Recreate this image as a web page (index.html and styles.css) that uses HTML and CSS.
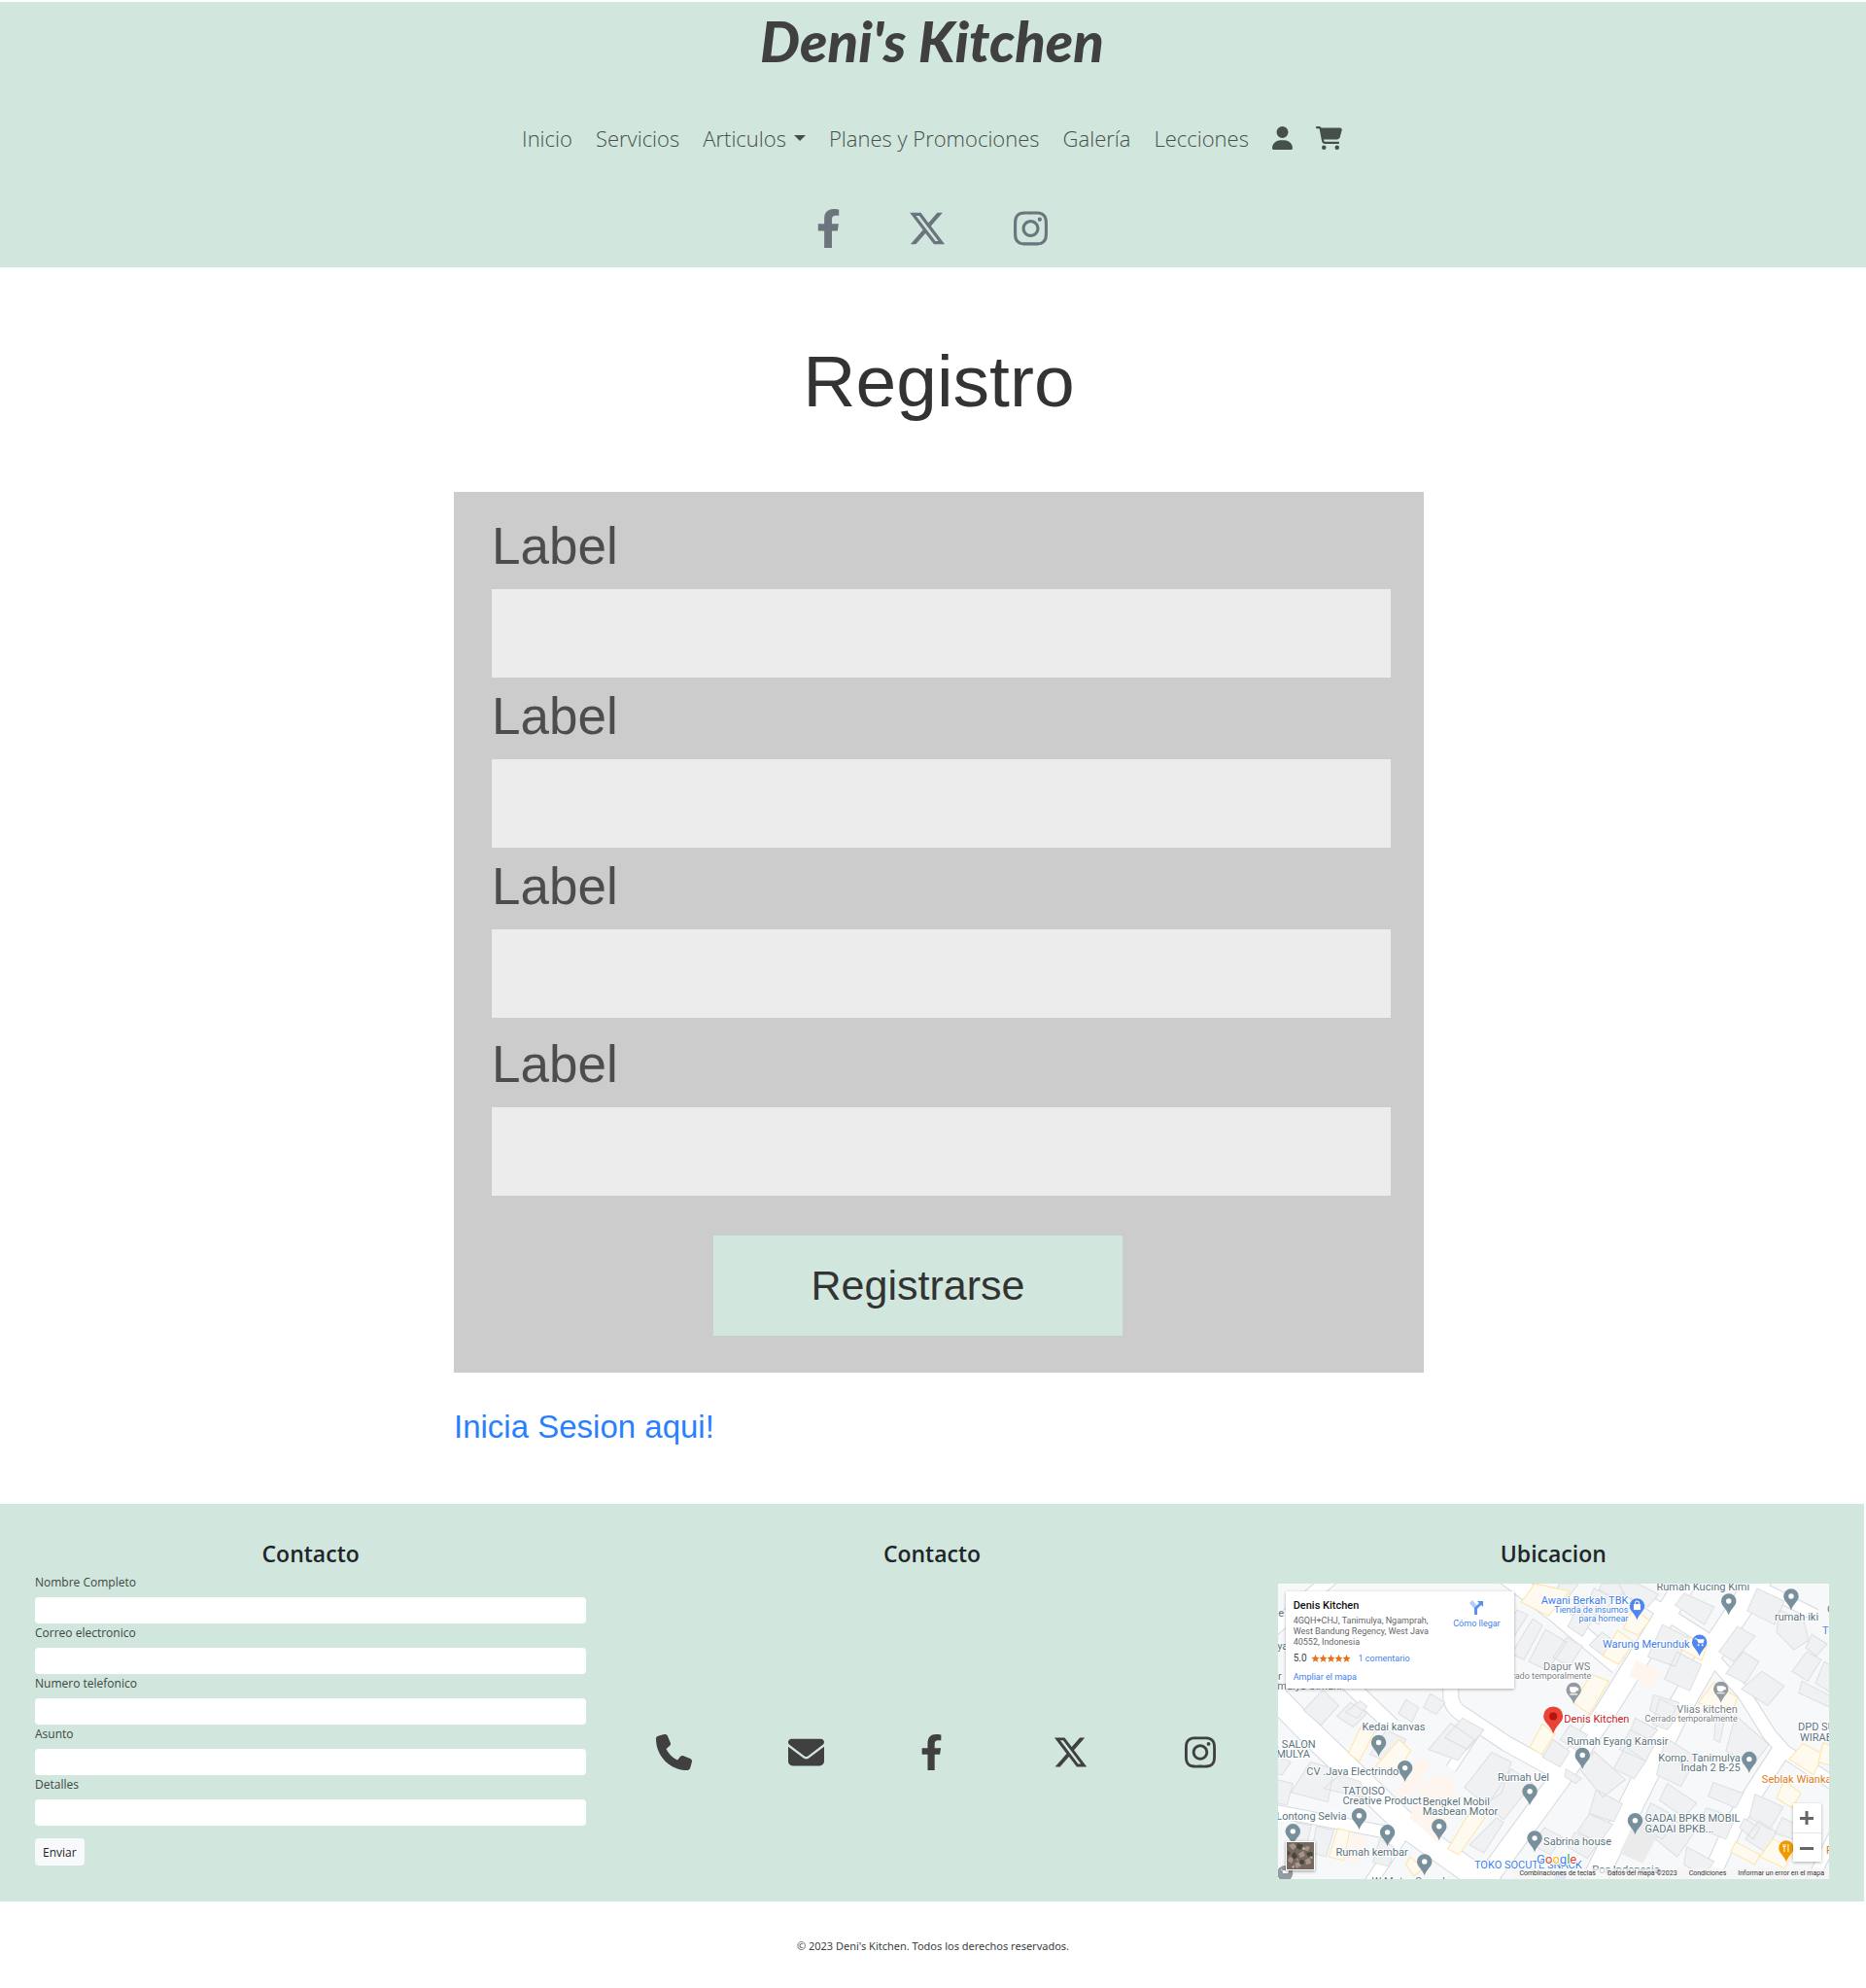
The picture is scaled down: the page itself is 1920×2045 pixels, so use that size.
FILE: index.html
```html
<!DOCTYPE html>
<html lang="es">
<head>
<meta charset="utf-8">
<meta name="viewport" content="width=device-width, initial-scale=1">
<title>Deni's Kitchen</title>
<link rel="stylesheet" href="styles.css">
</head>
<body>
<svg class="sprite" aria-hidden="true">
  <symbol id="user" viewBox="0 0 448 512"><path d="M224 256A128 128 0 1 0 224 0a128 128 0 1 0 0 256zm-45.7 48C79.8 304 0 383.8 0 482.3C0 498.7 13.3 512 29.7 512H418.3c16.4 0 29.7-13.3 29.7-29.7C448 383.8 368.2 304 269.7 304H178.3z"/></symbol>
  <symbol id="cart" viewBox="0 0 576 512"><path d="M0 24C0 10.7 10.7 0 24 0H69.5c22 0 41.5 12.8 50.6 32h411c26.3 0 45.5 25 38.6 50.4l-41 152.3c-8.5 31.4-37 53.3-69.5 53.3H170.7l5.4 28.5c2.2 11.3 12.1 19.5 23.6 19.5H488c13.3 0 24 10.7 24 24s-10.7 24-24 24H199.7c-34.6 0-64.3-24.6-70.7-58.5L77.4 54.5c-.7-3.8-4-6.5-7.9-6.5H24C10.7 48 0 37.3 0 24zM128 464a48 48 0 1 1 96 0 48 48 0 1 1 -96 0zm336-48a48 48 0 1 1 0 96 48 48 0 1 1 0-96z"/></symbol>
  <symbol id="facebook" viewBox="0 0 320 512"><path d="M279.14 288l14.22-92.66h-88.91v-60.13c0-25.35 12.42-50.06 52.24-50.06h40.42V6.26S260.43 0 225.36 0c-73.22 0-121.08 44.38-121.08 124.72v70.62H22.89V288h81.39v224h100.17V288z"/></symbol>
  <symbol id="x" viewBox="0 0 512 512"><path d="M389.2 48h70.6L305.6 224.2 487 464H345L233.7 318.6 106.5 464H35.8L200.7 275.5 26.8 48H172.4L272.9 180.9 389.2 48zM364.4 421.8h39.1L151.1 88h-42L364.4 421.8z"/></symbol>
  <symbol id="instagram" viewBox="0 0 448 512"><path d="M224.1 141c-63.6 0-114.9 51.3-114.9 114.9s51.3 114.9 114.9 114.9S339 319.5 339 255.9 287.7 141 224.1 141zm0 189.6c-41.1 0-74.7-33.5-74.7-74.7s33.5-74.7 74.7-74.7 74.7 33.5 74.7 74.7-33.6 74.7-74.7 74.7zm146.4-194.3c0 14.9-12 26.8-26.8 26.8-14.9 0-26.8-12-26.8-26.8s12-26.8 26.8-26.8 26.8 12 26.8 26.8zm76.1 27.2c-1.7-35.9-9.9-67.7-36.2-93.9-26.2-26.2-58-34.4-93.9-36.2-37-2.1-147.9-2.1-184.9 0-35.8 1.7-67.6 9.9-93.9 36.1s-34.4 58-36.2 93.9c-2.1 37-2.1 147.9 0 184.9 1.7 35.9 9.9 67.7 36.2 93.9s58 34.4 93.9 36.2c37 2.1 147.9 2.1 184.9 0 35.9-1.7 67.7-9.9 93.9-36.2 26.2-26.2 34.4-58 36.2-93.9 2.1-37 2.1-147.8 0-184.8zM398.8 388c-7.8 19.6-22.9 34.7-42.6 42.6-29.5 11.7-99.5 9-132.1 9s-102.7 2.6-132.1-9c-19.6-7.8-34.7-22.9-42.6-42.6-11.7-29.5-9-99.5-9-132.1s-2.6-102.7 9-132.1c7.8-19.6 22.9-34.7 42.6-42.6 29.5-11.7 99.5-9 132.1-9s102.7-2.6 132.1 9c19.6 7.8 34.7 22.9 42.6 42.6 11.7 29.5 9 99.5 9 132.1s2.7 102.7-9 132.1z"/></symbol>
  <symbol id="phone" viewBox="0 0 512 512"><path d="M164.9 24.6c-7.7-18.6-28-28.5-47.4-23.2l-88 24C12.1 30.2 0 46 0 64C0 311.4 200.6 512 448 512c18 0 33.8-12.1 38.6-29.5l24-88c5.3-19.4-4.6-39.7-23.2-47.4l-96-40c-16.3-6.8-35.2-2.1-46.3 11.6L304.7 368C234.3 334.7 177.3 277.7 144 207.3L193.3 167c13.7-11.2 18.4-30 11.6-46.3l-40-96z"/></symbol>
  <symbol id="envelope" viewBox="0 0 512 512"><path d="M48 64C21.5 64 0 85.5 0 112c0 15.1 7.1 29.3 19.2 38.4L236.8 313.6c11.4 8.5 27 8.5 38.4 0L492.8 150.4c12.1-9.1 19.2-23.3 19.2-38.4c0-26.5-21.5-48-48-48H48zM0 176V384c0 35.3 28.7 64 64 64H448c35.3 0 64-28.7 64-64V176L294.4 339.2c-22.8 17.1-54 17.1-76.8 0L0 176z"/></symbol>
  <symbol id="pin" viewBox="-8 -8 16 23" overflow="visible"><path d="M0-7.7A7.7 7.7 0 0 1 7.7 0C7.7 5 2.200 7.500 0 14.300C-2.200 7.500-7.700 5-7.700 0A7.700 7.700 0 0 1 0-7.700z"/></symbol>
</svg>

<header class="header">
  <a class="brand" href="#">Deni's Kitchen</a>
  <nav class="nav" aria-label="Principal">
    <a href="#">Inicio</a>
    <a href="#">Servicios</a>
    <button class="nav-toggle" type="button" aria-haspopup="true">Articulos<span class="caret"></span></button>
    <a href="#">Planes y Promociones</a>
    <a href="#">Galería</a>
    <a href="#">Lecciones</a>
    <a href="#" aria-label="Cuenta"><svg width="21" height="24"><use href="#user"/></svg></a>
    <a href="#" aria-label="Carrito"><svg width="27" height="24"><use href="#cart"/></svg></a>
  </nav>
  <div class="header-social">
    <a href="#" aria-label="Facebook"><svg width="25" height="40"><use href="#facebook"/></svg></a>
    <a href="#" aria-label="X"><svg width="40" height="40"><use href="#x"/></svg></a>
    <a href="#" aria-label="Instagram"><svg width="35" height="40"><use href="#instagram"/></svg></a>
  </div>
</header>

<main class="main">
  <h1>Registro</h1>
  <form class="register">
    <div class="field"><label for="r1">Label</label><input id="r1" type="text"></div>
    <div class="field"><label for="r2">Label</label><input id="r2" type="text"></div>
    <div class="field"><label for="r3">Label</label><input id="r3" type="text"></div>
    <div class="field field-last"><label for="r4">Label</label><input id="r4" type="text"></div>
    <div class="register-actions"><button type="submit">Registrarse</button></div>
  </form>
  <a class="login-link" href="#">Inicia Sesion aqui!</a>
</main>

<footer>
  <div class="footer-columns">
    <section class="column">
      <h2>Contacto</h2>
      <form class="contact">
        <label for="c1">Nombre Completo</label><input id="c1" type="text">
        <label for="c2">Correo electronico</label><input id="c2" type="email">
        <label for="c3">Numero telefonico</label><input id="c3" type="tel">
        <label for="c4">Asunto</label><input id="c4" type="text">
        <label for="c5">Detalles</label><input id="c5" type="text">
        <button type="submit">Enviar</button>
      </form>
    </section>

    <section class="column">
      <h2>Contacto</h2>
      <div class="footer-social">
        <a href="#" aria-label="Teléfono"><svg width="37" height="37"><use href="#phone"/></svg></a>
        <a href="#" aria-label="Correo"><svg width="37" height="37"><use href="#envelope"/></svg></a>
        <a class="social-wide" href="#" aria-label="Facebook"><svg width="23" height="37"><use href="#facebook"/></svg></a>
        <a href="#" aria-label="X"><svg width="37" height="37"><use href="#x"/></svg></a>
        <a href="#" aria-label="Instagram"><svg width="32" height="37"><use href="#instagram"/></svg></a>
      </div>
    </section>

    <section class="column">
      <h2>Ubicacion</h2>
      <div class="map">
        <svg class="map-canvas" viewBox="0 0 567 303" preserveAspectRatio="xMidYMid slice" role="img" aria-label="Mapa de Denis Kitchen">
          <rect width="567" height="303" fill="#f7f8fa"/>
          <g class="road-edge">
            <path stroke-width="26" d="M-20 98L28 147L138 253L225 315"/>
            <path stroke-width="17" d="M60 90L118 146"/>
            <path stroke-width="17" d="M178 100V118Q180 128 190 134L235 164L295 197"/>
            <path stroke-width="12" d="M203 152L178 190"/>
            <path stroke-width="20" d="M232 -10L285 30L350 84"/>
            <path stroke-width="23" d="M208 312L290 200L335 134L395 37L424 -10"/>
            <path stroke-width="15" d="M335 -10L445 60"/>
            <path stroke-width="26" d="M498 -10L448 66L412 128L322 310"/>
            <path stroke-width="15" d="M445 75L478 112L505 155L520 172L575 208"/>
            <path stroke-width="20" d="M516 172L472 240L440 310"/>
            <path stroke-width="14" d="M-8 232L128 258L92 312"/>
            <path stroke-width="13" d="M492 2L552 32"/>
            <path stroke-width="13" d="M575 250L545 312"/>
            <path stroke-width="16" d="M-8 50L60 -10"/>
          </g>
          <g class="road">
            <path stroke-width="24" d="M-20 98L28 147L138 253L225 315"/>
            <path stroke-width="15" d="M60 90L118 146"/>
            <path stroke-width="15" d="M178 100V118Q180 128 190 134L235 164L295 197"/>
            <path stroke-width="10" d="M203 152L178 190"/>
            <path stroke-width="18" d="M232 -10L285 30L350 84"/>
            <path stroke-width="21" d="M208 312L290 200L335 134L395 37L424 -10"/>
            <path stroke-width="13" d="M335 -10L445 60"/>
            <path stroke-width="24" d="M498 -10L448 66L412 128L322 310"/>
            <path stroke-width="13" d="M445 75L478 112L505 155L520 172L575 208"/>
            <path stroke-width="18" d="M516 172L472 240L440 310"/>
            <path stroke-width="12" d="M-8 232L128 258L92 312"/>
            <path stroke-width="11" d="M492 2L552 32"/>
            <path stroke-width="11" d="M575 250L545 312"/>
            <path stroke-width="14" d="M-8 50L60 -10"/>
          </g>
          <g class="building">
            <path d="M47 109L63 125L45 145L27 130zM85 120L92 126L82 138L70 132zM132 119L145 127L138 142L124 133zM157 113L172 122L163 134L150 127zM75 122L92 133L78 147L61 136z"/>
            <path d="M246 27L257 32L243 54L232 45zM262 36L272 43L253 78L240 72zM275 47L297 60L277 89L258 80zM297 55L313 64L300 85L283 76z"/>
            <path d="M289 0H309L295 18L285 10zM310 20L327 31L313 54L298 44zM325 5L345 14L330 42L312 32zM348 18L362 0H333L330 6z"/>
            <path d="M333 50L349 61L336 75L320 63zM350 0H370L391 11L380 24L357 12z"/>
            <path d="M417 10L448 24L438 42L408 22zM395 42L421 55L408 85L380 75zM410 70L435 83L423 110L397 98z"/>
            <path d="M492 5L520 18L510 42L482 28zM515 27L540 38L545 58L530 68L512 50zM472 44L490 54L468 80L453 70zM478 70L494 80L480 102L460 92zM497 90L520 105L503 125L476 108z"/>
            <path d="M543 70L558 78L544 100L528 90zM561 80L580 92L568 112L552 102zM548 52L564 62L553 74L542 66zM538 100L567 115V127L535 112z"/>
            <path d="M386 114L412 122L402 140L382 130zM367 138L390 150L375 168L360 158zM392 118L415 130L400 150L385 144z"/>
            <path d="M325 172L357 201L334 219L310 190zM327 211L354 226L345 244L320 236zM320 236L344 247L330 266L308 254zM305 255L330 265L318 282L298 270zM296 190L312 200L306 205L295 198z"/>
            <path d="M362 150L388 163L378 182L351 170zM357 167L378 182L366 200L345 190zM398 158L430 178L414 208L389 196z"/>
            <path d="M450 130L460 133L454 163L448 160zM470 135L504 165L489 185L460 172zM447 204L478 215L470 230L442 218zM400 205L430 225L417 240L392 222z"/>
            <path d="M440 230L470 240L460 262L430 250zM395 238L430 252L410 280L388 262zM420 270L448 285L437 300L417 288zM383 225L410 240L395 262L372 250z"/>
            <path d="M490 216L519 229L505 252L484 240zM479 241L495 250L488 262L474 250zM494 243L512 255L500 275L480 262zM518 240L530 246V262L510 256z"/>
            <path d="M178 143L202 160L185 181L155 170zM190 138L212 150L195 170L172 158z"/>
            <path d="M220 173L240 183L230 215L213 226L192 209zM240 190L262 205L232 242L215 228zM283 160L300 172L290 188L272 178zM300 145L318 155L308 172L290 160z"/>
            <path d="M112 150L132 160L118 185L95 175zM34 183L58 190L52 224L14 214zM64 196L85 203L92 220L64 214L48 210zM-5 175L14 183L5 196L-5 195zM-5 200L16 205L10 227L-5 224z"/>
            <path d="M20 245L35 248L28 277L12 272zM40 249L58 253L50 280L35 276zM105 262L120 270L115 290L98 286zM225 240L232 245L212 276L197 268zM274 250L292 260L280 278L262 268z"/>
            <path class="shade" d="M369 238L393 252L375 287L351 276z"/>
          </g>
          <g class="shop">
            <path d="M255 13L264 0L300 8L278 33L250 19zM365 25L382 38L370 53L355 46zM349 48L366 60L350 83L334 74z"/>
            <path d="M423 55L441 63L435 79L414 67zM448 101L472 117L465 134L432 122zM322 93L340 100L320 134L304 122z"/>
            <path d="M272 144L285 154L271 175L259 168zM88 142L101 150L84 182L73 174zM125 160L137 171L120 198L101 187z"/>
            <path d="M539 164L560 175L550 196L525 180zM520 202L537 215L528 230L512 220zM508 262L532 272L520 292L495 280zM470 265L495 278L490 288L465 275z"/>
            <path d="M200 230L213 240L186 278L175 272zM62 251L74 254L68 284L53 280zM560 163L580 172V190L555 183zM136 280L150 292L140 300L132 288z"/>
            <path class="peach" d="M368 78L393 90L384 106L361 95zM147 178L158 184L135 222L120 216zM168 196L183 200L180 230L165 266L136 240L148 205zM76 256L92 260L82 288L70 284z"/>
          </g>
          <g class="pin-slate">
            <use href="#pin" x="455" y="10" width="16" height="23"/><use href="#pin" x="519" y="5" width="16" height="23"/>
            <use href="#pin" x="96" y="155" width="16" height="23"/><use href="#pin" x="123" y="181" width="16" height="23"/>
            <use href="#pin" x="76" y="230" width="16" height="23"/><use href="#pin" x="8" y="246" width="16" height="23"/>
            <use href="#pin" x="105" y="247" width="16" height="23"/><use href="#pin" x="143" y="277" width="16" height="23"/>
            <use href="#pin" x="158" y="241" width="16" height="23"/><use href="#pin" x="251" y="205" width="16" height="23"/>
            <use href="#pin" x="256" y="253" width="16" height="23"/><use href="#pin" x="305" y="168" width="16" height="23"/>
            <use href="#pin" x="476" y="172" width="16" height="23"/><use href="#pin" x="359" y="235" width="16" height="23"/>
          </g>
          <g fill="#fff">
            <circle cx="463" cy="18" r="2.700"/><circle cx="527" cy="13" r="2.700"/><circle cx="104" cy="163" r="2.700"/><circle cx="131" cy="189" r="2.700"/>
            <circle cx="84" cy="238" r="2.700"/><circle cx="16" cy="254" r="2.700"/><circle cx="113" cy="255" r="2.700"/><circle cx="151" cy="285" r="2.700"/>
            <circle cx="166" cy="249" r="2.700"/><circle cx="259" cy="213" r="2.700"/><circle cx="264" cy="261" r="2.700"/><circle cx="313" cy="176" r="2.700"/>
            <circle cx="484" cy="180" r="2.700"/><circle cx="367" cy="243" r="2.700"/>
          </g>
          <g fill="#949aa1"><use href="#pin" x="296" y="101" width="16" height="23"/><use href="#pin" x="447" y="100" width="16" height="23"/><circle cx="8" cy="297" r="8"/></g>
          <g fill="#fff">
            <path id="cup" d="M300 106h7v1h2v3h-2q-1 2-2 2h-3q-2-1-2-3zM300 113h8v1h-8z"/><use href="#cup" x="151" y="-1"/>
            <path d="M3 293h2l1 4h5l1-3H6"/>
          </g>
          <g fill="#4f86f0"><use href="#pin" x="361" y="15" width="16" height="23"/><use href="#pin" x="425" y="52" width="16" height="23"/><circle cx="290" cy="300" r="6" opacity=".4"/></g>
          <path d="M365.500 21h7v6h-7z" fill="#fff"/><path d="M367 21v-1a2 2 0 0 1 4 0v1" fill="none" stroke="#fff"/>
          <path d="M428 56h2l1 1h7l-1 4h-5l-2-4h-2z" fill="#fff"/><circle cx="432" cy="63" r="1" fill="#fff"/><circle cx="436" cy="63" r="1" fill="#fff"/>
          <use href="#pin" x="514" y="263" width="16" height="23" fill="#f29900"/>
          <path d="M519 267v3M521 267v3M520 269v6M524 267v8" fill="none" stroke="#fff"/>
          <path d="M283 126a10 10 0 0 1 10 10c0 6-7 9-10 18c-3-9-10-12-10-18a10 10 0 0 1 10-10z" fill="#ea4335"/><circle cx="283" cy="136" r="4" fill="#b31412"/>
          <g class="place">
            <text x="389" y="7">Rumah Kucing Kimi</text><text x="510" y="38">rumah iki</text><text x="564" y="30">C</text>
            <text x="534" y="151">DPD SU</text><text x="536" y="161">WIRABU</text><text x="297" y="165">Rumah Eyang Kamsir</text>
            <text class="end" x="475" y="182">Komp. Tanimulya</text><text class="end" x="475" y="192">Indah 2 B-25</text>
            <text x="377" y="244">GADAI BPKB MOBIL</text><text x="377" y="255">GADAI BPKB...</text><text x="273" y="268">Sabrina house</text>
            <text x="323" y="297">Pos Indonesia</text><text x="87" y="151">Kedai kanvas</text><text x="-1" y="168">. SALON</text><text x="-1" y="178">MULYA</text>
            <text x="30" y="196">CV .Java Electrindo</text><text x="67" y="216">TATOISO</text><text x="67" y="226">Creative Product</text>
            <text x="149" y="227">Bengkel Mobil</text><text x="149" y="237">Masbean Motor</text><text x="226" y="202">Rumah Uel</text>
            <text x="-1" y="242">Lontong Selvia</text><text x="60" y="279">Rumah kembar</text><text x="97" y="309">W Motor Speed</text>
            <text x="1" y="34">e</text><text x="0" y="68">ya</text><text x="-5" y="99">er</text><text x="0" y="109">mulya Cimahi</text>
          </g>
          <g class="place closed">
            <text class="end" x="321" y="89">Dapur WS</text><text class="end small" x="322" y="98">Cerrado temporalmente</text>
            <text class="end" x="472" y="133">Vlias kitchen</text><text class="end small" x="472" y="142">Cerrado temporalmente</text>
          </g>
          <g class="place store">
            <text class="end" x="360" y="21">Awani Berkah TBK</text><text class="end small" x="360" y="30">Tienda de insumos</text><text class="end small" x="360" y="39">para hornear</text>
            <text class="end" x="423" y="66">Warung Merunduk</text><text x="559" y="52">Tu</text><text x="202" y="292">TOKO SOCUTE SNACK</text>
          </g>
          <text class="place here" x="294" y="143">Denis Kitchen</text>
          <g class="place food"><text x="497" y="204">Seblak Wianka</text><text x="563" y="277">F</text></g>
          <text class="google" x="266" y="287"><tspan fill="#4285f4">G</tspan><tspan fill="#ea4335">o</tspan><tspan fill="#fbbc05">o</tspan><tspan fill="#4285f4">g</tspan><tspan fill="#34a853">l</tspan><tspan fill="#ea4335">e</tspan></text>
        </svg>

        <div class="place-card">
          <div class="place-info">
            <strong>Denis Kitchen</strong>
            <p>4GQH+CHJ, Tanimulya, Ngamprah, West Bandung Regency, West Java 40552, Indonesia</p>
            <div class="rating"><span>5.0</span>
              <svg width="41" height="8" viewBox="0 0 50 10" aria-label="5 estrellas"><path id="star" d="M5 0l1.500 3.400 3.500.3-2.700 2.400.9 3.600L5 7.700 1.800 9.700l.9-3.600L0 3.700l3.500-.3z"/><use href="#star" x="10"/><use href="#star" x="20"/><use href="#star" x="30"/><use href="#star" x="40"/></svg>
              <a href="#">1 comentario</a></div>
            <a href="#">Ampliar el mapa</a>
          </div>
          <a class="directions" href="#">
            <svg width="14" height="15" viewBox="0 0 14 15"><path d="M0 3L3 0L8 6V9H5z" fill="#b3cbfa"/><path d="M5 15V8L10 3L8 1H14V7L12 5L8 9V15z" fill="#5b8df5"/></svg>
            Cómo llegar
          </a>
        </div>
        <button class="satellite" type="button" aria-label="Vista satélite">
          <svg width="28" height="28" viewBox="0 0 28 28"><rect width="28" height="28" fill="#75685f"/><path d="M2 3l5-2 3 4-4 3zM12 12l5-3 2 5-5 2zM3 15l4 2-2 5-4-3zM19 18l5-2 1 6-5 1zM8 22l4-2 3 4-5 3zM20 4l4 1-2 4-4-1z" fill="#a89588"/><path d="M11 1l6 2-3 5-4-2zM20 11l6-1 1 4-5 1zM8 10l3 5-4 3-2-5zM14 18l4 1-1 4-4-1zM1 9l3 2-3 3z" fill="#47443c"/><path d="M17 5l2 1-1 2-2-1zM10 17l2 1-1 1zM24 14l3 2-2 1zM5 25l3-1-1 3z" fill="#d3bfb0"/></svg>
        </button>
        <div class="zoom">
          <button type="button" aria-label="Acercar"><svg width="14" height="14"><path d="M0 6h5.500V0h3v6H14v3H8.500v5h-3V9H0z"/></svg></button>
          <button type="button" aria-label="Alejar"><svg width="14" height="14"><path d="M0 6h14v3H0z"/></svg></button>
        </div>
        <div class="map-legal"><a href="#">Combinaciones de teclas</a><span>Datos del mapa ©2023</span><a href="#">Condiciones</a><a href="#">Informar un error en el mapa</a></div>
      </div>
    </section>
  </div>
  <p class="copyright">© 2023 Deni's Kitchen. Todos los derechos reservados.</p>
</footer>
</body>
</html>
```
FILE: styles.css
```css
* { box-sizing: border-box; }

body {
  margin: 0;
  padding-top: 2px;
  background: #fff;
  color: #212529;
  font-family: "Open Sans", "Noto Sans", sans-serif;
}

a { color: inherit; text-decoration: none; }
button, input { font: inherit; border: 0; }
button { cursor: pointer; }
svg { display: block; fill: currentColor; }
.sprite { position: absolute; width: 0; height: 0; }

/* Header */
.header {
  display: flex;
  flex-direction: column;
  align-items: center;
  padding: 4px 2px 20px 0;
  background: #d1e7dd;
}

.brand {
  color: #404040;
  font: italic 900 58px/72px Lato, sans-serif;
}

.nav {
  display: flex;
  flex-wrap: wrap;
  align-items: center;
  justify-content: center;
  gap: 24px;
  margin-top: 48px;
  color: #46504b;
  font-size: 22px;
  font-weight: 300;
  line-height: 32px;
}

.nav-toggle {
  display: flex;
  align-items: center;
  gap: 8px;
  padding: 0;
  background: none;
  color: inherit;
}

.caret {
  border: 6px solid transparent;
  border-top-color: currentColor;
  border-bottom: 0;
}

.header-social {
  display: flex;
  gap: 69px;
  margin-top: 57px;
  color: #6c757d;
}

/* Registration */
.main {
  width: 100%;
  max-width: 1010px;
  margin: 0 auto;
  padding: 0 0 59px 12px;
  font-family: "Liberation Sans", Arial, sans-serif;
}

h1 {
  margin: 0;
  padding: 73px 0 69px;
  color: #333;
  font-size: 75px;
  font-weight: 400;
  line-height: 89px;
  text-align: center;
}

.register {
  padding: 16px 34px 38px 39px;
  background: #ccc;
}

.field label {
  display: block;
  margin-bottom: 4px;
  color: #4d4d4d;
  font-size: 53px;
  line-height: 80px;
}

.field input {
  display: block;
  width: 100%;
  height: 91px;
  padding: 0 24px;
  background: #ececec;
  font-size: 43px;
}

.field-last { padding-top: 8px; }

.register-actions {
  display: flex;
  justify-content: center;
  padding: 41px 48px 0 0;
}

.register-actions button {
  width: 421px;
  height: 103px;
  background: #d1e7dd;
  color: #333;
  font-size: 43px;
}

.login-link {
  display: inline-block;
  margin-top: 36px;
  color: #2a7fff;
  font-size: 33px;
  line-height: 40px;
}

/* Footer */
.footer-columns {
  display: grid;
  grid-template-columns: repeat(3, 1fr);
  margin-right: 2px;
  background: #d1e7dd;
}

.column {
  display: flex;
  flex-direction: column;
  min-width: 0;
  padding: 35px 36px 23px;
}

h2 {
  margin: 0 0 4px;
  font-size: 23px;
  font-weight: 600;
  line-height: 32px;
  text-align: center;
}

.contact { font-size: 12px; }
.contact label { display: block; color: #3c4643; line-height: 20px; }

.contact input {
  display: block;
  width: 100%;
  height: 27px;
  margin-top: 5px;
  padding: 0 8px;
  border-radius: 4px;
  background: #fff;
}

.contact button {
  height: 28px;
  margin-top: 13px;
  padding: 0 8px;
  border-radius: 4px;
  background: #f8f9fa;
  color: #212529;
}

.footer-social {
  display: flex;
  flex: 1;
  align-items: center;
  justify-content: space-between;
  margin-right: -8px;
  padding-top: 54px;
  color: #404040;
}

.social-wide { width: 37px; }

.copyright {
  margin: 0;
  padding: 36px 0 32px;
  color: #3c4043;
  font-family: "Noto Sans", sans-serif;
  font-size: 11px;
  line-height: 20px;
  text-align: center;
}

/* Map */
.map {
  position: relative;
  height: 304px;
  margin-top: 11px;
  overflow: hidden;
  font-family: Roboto, sans-serif;
}

.map-canvas { width: 100%; height: 100%; }
.road, .road-edge { fill: none; stroke: #fff; stroke-linejoin: round; }
.road-edge { stroke: #d5d8de; }
.building { fill: #f0f1f3; stroke: #dcdfe3; }
.building .shade { fill: #ebebeb; stroke: none; }
.shop { fill: #fffaf0; stroke: #fce5a5; }
.shop .peach { fill: #fef5ee; stroke: none; }
.pin-slate { fill: #78909c; }

.place {
  fill: #5b7480;
  stroke: #fff;
  stroke-width: 2px;
  paint-order: stroke;
  font-size: 11px;
}
.place .end { text-anchor: end; }
.place .small { font-size: 9px; }
.closed { fill: #7b8187; }
.store { fill: #3d7eea; }
.here { fill: #c5221f; }
.food { fill: #dc7a1e; }
.google { font-size: 13px; stroke: #fff; stroke-width: 2px; paint-order: stroke; }

.place-card {
  position: absolute;
  top: 8px;
  left: 8px;
  display: flex;
  justify-content: space-between;
  width: 235px;
  padding: 9px 14px 6px 8px;
  background: #fff;
  box-shadow: 0 1px 3px rgba(0, 0, 0, .3);
  color: #666;
  font-size: 9px;
  line-height: 11px;
}

.place-card a { color: #427fed; }
.place-card strong { display: block; color: #111; font-size: 11px; font-weight: 500; }
.place-info { width: 142px; }
.place-info p { margin: 5px 0; }
.rating { display: flex; align-items: center; gap: 4px; margin-bottom: 8px; color: #444; line-height: 12px; }
.rating span { font-size: 10px; }
.rating svg { fill: #e7711b; }
.rating a { margin-left: 4px; }

.directions {
  display: flex;
  flex-direction: column;
  align-items: center;
  gap: 4px;
  white-space: nowrap;
}

.satellite {
  position: absolute;
  bottom: 9px;
  left: 8px;
  padding: 1px;
  background: #fff;
  box-shadow: 0 1px 3px rgba(0, 0, 0, .4);
}

.zoom {
  position: absolute;
  right: 8px;
  bottom: 18px;
  width: 29px;
  background: #fff;
  box-shadow: 0 1px 3px rgba(0, 0, 0, .3);
  color: #666;
}

.zoom button {
  display: grid;
  place-items: center;
  width: 100%;
  height: 30px;
  padding: 0;
  background: none;
  color: inherit;
}

.zoom button + button { border-top: 1px solid #e6e6e6; }

.map-legal {
  position: absolute;
  right: 0;
  bottom: 0;
  display: flex;
  gap: 12px;
  padding: 0 5px;
  background: rgba(245, 245, 245, .7);
  color: #333;
  font-size: 7px;
  line-height: 11px;
  white-space: nowrap;
}
```
